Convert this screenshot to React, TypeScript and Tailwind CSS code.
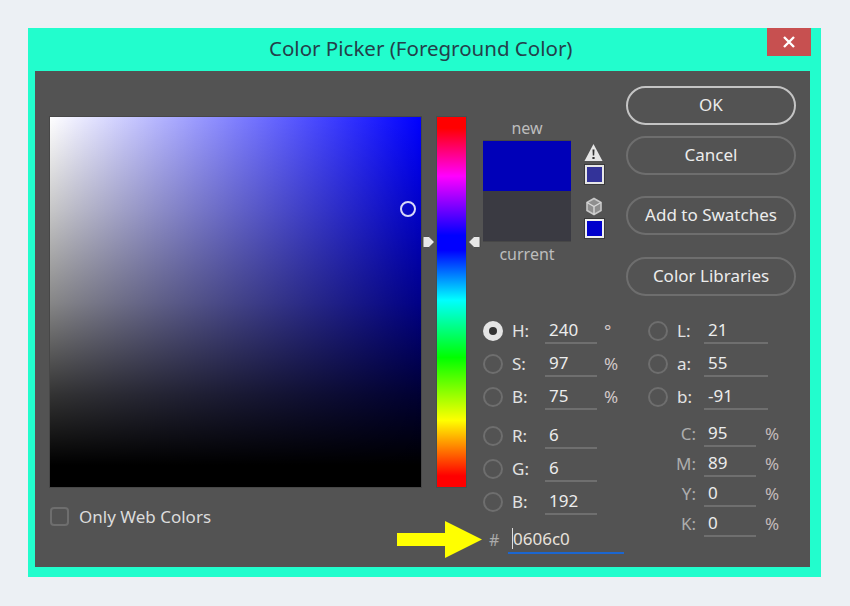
import React from "react";

const font = "font-['Noto_Sans','Open_Sans',sans-serif]";

function Radio({ on }: { on?: boolean }) {
  return on ? (
    <span className="flex h-5 w-5 shrink-0 items-center justify-center rounded-full bg-[#e4e4e4]">
      <span className="h-2 w-2 rounded-full bg-[#333333]" />
    </span>
  ) : (
    <span className="h-5 w-5 shrink-0 rounded-full border-2 border-[#6e6e6e]" />
  );
}

function Row({
  on,
  label,
  value,
  unit,
  wide,
}: {
  on?: boolean;
  label: string;
  value: string;
  unit?: string;
  wide?: boolean;
}) {
  return (
    <div className="flex h-[33px] items-end">
      <div className="flex h-[33px] w-[29px] shrink-0 items-end pb-[3px]">
        <Radio on={on} />
      </div>
      <span className={`${wide ? "w-[27px]" : "w-[33px]"} shrink-0 pb-[1px] text-[#e2e2e2]`}>{label}</span>
      <span className={`${wide ? "w-[64px]" : "w-[52px]"} block h-[25px] shrink-0 border-b-2 border-[#6f6f6f] pl-[4px] leading-[21px] text-[#ececec]`}>
        {value}
      </span>
      {unit && <span className="ml-[7px] pb-[1px] text-[#d2c8c8]">{unit}</span>}
    </div>
  );
}

function CmykRow({ label, value }: { label: string; value: string }) {
  return (
    <div className="flex h-[30px] items-end">
      <span className="w-[56px] shrink-0 pb-[1px] pr-[8px] text-right text-[#adadad]">{label}</span>
      <span className="block h-[25px] w-[52px] shrink-0 border-b-2 border-[#6f6f6f] pl-[4px] leading-[21px] text-[#ececec]">
        {value}
      </span>
      <span className="ml-[9px] pb-[1px] text-[#c4baba]">%</span>
    </div>
  );
}

function PillButton({ text, strong }: { text: string; strong?: boolean }) {
  return (
    <div
      className={`flex h-[39px] w-[170px] items-center justify-center rounded-[20px] border-2 pb-[1px] text-[#ececec] ${
        strong ? "border-[#c4c4c4]" : "border-[#6e6e6e]"
      }`}
    >
      {text}
    </div>
  );
}

export default function App() {
  return (
    <div className={`${font} h-[606px] w-[850px] overflow-hidden bg-[#ecf0f4] pl-[28px] pt-[28px] text-[17px]`}>
      <div className="h-[549px] w-[793px] bg-[#22fdcd]">
        <div className="flex h-[43px] items-start justify-between pl-[241px] pr-[10px]">
          <span className="pt-[5px] text-[20.5px] leading-[30px] text-[#24404a]">Color Picker (Foreground Color)</span>
          <div className="flex h-[28px] w-[44px] items-center justify-center bg-[#c75050]">
            <svg width="14" height="14" viewBox="0 0 14 14">
              <path d="M2 2 L12 12 M12 2 L2 12" stroke="#ffffff" strokeWidth="2.4" />
            </svg>
          </div>
        </div>

        <div className="relative ml-[7px] flex h-[496px] w-[775px] bg-[#535353] pl-[15px] pt-[15px]">
          {/* Left */}
          <div className="w-[371px] shrink-0 pt-[31px]">
            <div className="relative h-[370px] w-[371px] bg-[linear-gradient(to_bottom,rgba(0,0,0,0)_0%,rgba(0,0,0,0.22)_25%,rgba(0,0,0,0.47)_50%,rgba(0,0,0,0.8)_75%,#000000_94%),linear-gradient(to_right,#ffffff,#0000ff)] shadow-[0_0_0_1px_#474747]">
              <span className="absolute left-[350px] top-[84px] h-4 w-4 rounded-full border-2 border-[#d8d8f8]" />
            </div>
            <div className="mt-[17px] flex items-center">
              <span className="h-[19px] w-[19px] rounded-[4px] border-2 border-[#6e6e6e]" />
              <span className="ml-[10px] text-[#dcdcdc]">Only Web Colors</span>
            </div>
          </div>

          {/* Hue */}
          <div className="relative ml-[16px] mt-[31px] h-[370px] w-[29px] shrink-0 bg-[linear-gradient(to_bottom,#ff0000_0%,#ff0000_3%,#ff00ff_16%,#0000ff_32%,#0000ff_36%,#00ffff_49.5%,#00ff00_65%,#ffff00_82%,#ff0000_97%,#ff0000_100%)] shadow-[0_0_0_1px_#445050]">
            <svg className="absolute left-[-15px] top-[118px]" width="13" height="14" viewBox="0 0 13 14">
              <path d="M2 1.5 H7 L12.5 7 L7 12.5 H2 Q1 12.5 1 11.5 V2.5 Q1 1.5 2 1.5 Z" fill="#e8e8e8" stroke="#3c3c3c" strokeWidth="0.8" />
            </svg>
            <svg className="absolute left-[31px] top-[118px]" width="13" height="14" viewBox="0 0 13 14">
              <path d="M11 1.5 H6 L0.5 7 L6 12.5 H11 Q12 12.5 12 11.5 V2.5 Q12 1.5 11 1.5 Z" fill="#e8e8e8" stroke="#3c3c3c" strokeWidth="0.8" />
            </svg>
          </div>

          {/* Right */}
          <div className="ml-[17px] w-[312px] shrink-0">
            <div className="flex h-[225px]">
              <div className="w-[143px] shrink-0">
                <div className="flex">
                  <div className="w-[88px]">
                    <div className="mt-[31px] text-center text-[16px] leading-[22px] text-[#bdbdbd]">new</div>
                    <div className="mt-[2px] h-[50px] bg-[#0000b8] shadow-[0_-1px_0_0_#474747]" />
                    <div className="h-[50px] bg-[#3a3a42] shadow-[0_1px_0_0_#474747]" />
                    <div className="mt-[2px] text-center text-[16px] leading-[22px] text-[#bdbdbd]">current</div>
                  </div>
                  <div className="ml-[13px] flex flex-col items-start pt-[57px]">
                    <svg width="19" height="19" viewBox="0 0 19 19">
                      <path d="M9.5 1 L18.5 18 H0.5 Z" fill="#e6e6e6" />
                      <path d="M8.5 6.5 H10.5 L10.2 12.5 H8.8 Z M8.4 14 H10.6 V16 H8.4 Z" fill="#333333" />
                    </svg>
                    <div className="ml-[1px] mt-[3px] h-[19px] w-[19px] border-2 border-[#e6e6e6] bg-[#333399] shadow-[0_0_0_1px_#3a3a3a]" />
                    <svg className="ml-[1px] mt-[13px]" width="18" height="19" viewBox="0 0 18 19">
                      <path d="M9 1.5 L16 5.5 V13.5 L9 17.5 L2 13.5 V5.5 Z" fill="#8e8e8e" stroke="#c8c8c8" strokeWidth="1.6" />
                      <path d="M2 5.5 L9 9.5 L16 5.5 M9 9.5 V17.5" fill="none" stroke="#d8d8d8" strokeWidth="1.4" />
                    </svg>
                    <div className="ml-[1px] mt-[3px] h-[19px] w-[19px] border-2 border-[#f0f0f0] bg-[#0000cc] shadow-[0_0_0_1px_#3a3a3a]" />
                  </div>
                </div>
              </div>
              <div className="flex flex-col">
                <PillButton text="OK" strong />
                <div className="mt-[11px]"><PillButton text="Cancel" /></div>
                <div className="mt-[21px]"><PillButton text="Add to Swatches" /></div>
                <div className="mt-[22px]"><PillButton text="Color Libraries" /></div>
              </div>
            </div>

            <div className="flex">
              <div className="w-[165px] shrink-0">
                <Row on label="H:" value="240" unit="°" />
                <Row label="S:" value="97" unit="%" />
                <Row label="B:" value="75" unit="%" />
                <div className="h-[6px]" />
                <Row label="R:" value="6" />
                <Row label="G:" value="6" />
                <Row label="B:" value="192" />
                <div className="mt-[10px] flex h-[29px] items-end">
                  <span className="w-[25px] shrink-0 pb-[2px] pl-[6px] text-[16px] text-[#aaaaaa]">#</span>
                  <span className="relative block h-[27px] w-[116px] shrink-0 border-b-2 border-[#1b66d0] pl-[5px] leading-[24px] text-[#e8e2dc]">
                    <span className="absolute left-[4px] top-[1px] h-[21px] w-px bg-[#dddddd]" />
                    0606c0
                  </span>
                </div>
              </div>
              <div>
                <Row label="L:" value="21" wide />
                <Row label="a:" value="55" wide />
                <Row label="b:" value="-91" wide />
                <div className="h-[7px]" />
                <CmykRow label="C:" value="95" />
                <CmykRow label="M:" value="89" />
                <CmykRow label="Y:" value="0" />
                <CmykRow label="K:" value="0" />
              </div>
            </div>
          </div>

          {/* Annotation arrow */}
          <svg className="absolute left-[362px] top-[450px]" width="86" height="38" viewBox="0 0 86 38">
            <path d="M0 12 H48 V0 L85 18.5 L48 37 V25 H0 Z" fill="#ffff00" />
          </svg>
        </div>
      </div>
    </div>
  );
}
